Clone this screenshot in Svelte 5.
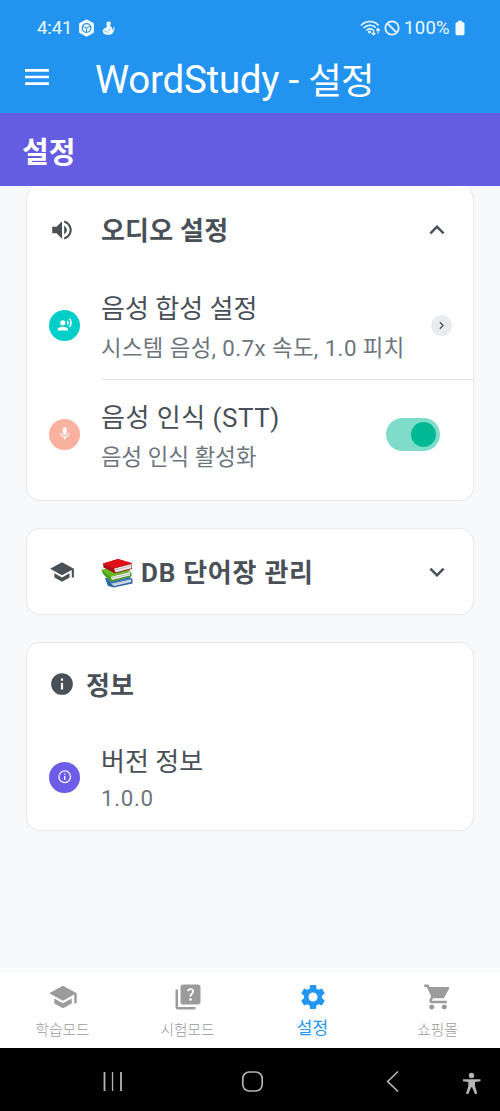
<script lang="ts">
  const icons = {
    volume:
      'M14,3.23V5.29C16.89,6.15 19,8.83 19,12C19,15.17 16.89,17.84 14,18.7V20.77C18,19.86 21,16.28 21,12C21,7.72 18,4.14 14,3.23M16.5,12C16.5,10.23 15.5,8.71 14,7.97V16C15.5,15.29 16.5,13.76 16.5,12M3,9V15H7L12,20V4L7,9H3Z',
    school:
      'M12,3L1,9L12,15L21,10.09V17H23V9M5,13.18V17.18L12,21L19,17.18V13.18L12,17L5,13.18Z',
    info: 'M13,9H11V7H13M13,17H11V11H13M12,2A10,10 0 0,0 2,12A10,10 0 0,0 12,22A10,10 0 0,0 22,12A10,10 0 0,0 12,2Z',
    infoOutline:
      'M11,9H13V7H11M12,20C7.59,20 4,16.41 4,12C4,7.59 7.59,4 12,4C16.41,4 20,7.59 20,12C20,16.41 16.41,20 12,20M12,2A10,10 0 0,0 2,12A10,10 0 0,0 12,22A10,10 0 0,0 22,12A10,10 0 0,0 12,2M11,17H13V11H11V17Z',
    mic: 'M12,2A3,3 0 0,1 15,5V11A3,3 0 0,1 12,14A3,3 0 0,1 9,11V5A3,3 0 0,1 12,2M19,11C19,14.53 16.39,17.44 13,17.93V21H11V17.93C7.61,17.44 5,14.53 5,11H7A5,5 0 0,0 12,16A5,5 0 0,0 17,11H19Z',
    voice:
      'M9,5A4,4 0 0,1 13,9A4,4 0 0,1 9,13A4,4 0 0,1 5,9A4,4 0 0,1 9,5M9,15C11.67,15 17,16.34 17,19V21H1V19C1,16.34 6.33,15 9,15M16.76,5.36C18.78,7.56 18.78,10.61 16.76,12.63L15.08,10.94C15.92,9.76 15.92,8.23 15.08,7.05L16.76,5.36M20.07,2C24,6.05 23.97,12.11 20.07,16L18.44,14.37C21.21,11.19 21.21,6.65 18.44,3.63L20.07,2Z',
    up: 'M7.41,15.41L12,10.83L16.59,15.41L18,14L12,8L6,14L7.41,15.41Z',
    down: 'M7.41,8.58L12,13.17L16.59,8.58L18,10L12,16L6,10L7.41,8.58Z',
    right: 'M8.59,16.58L13.17,12L8.59,7.41L10,6L16,12L10,18L8.59,16.58Z',
    menu: 'M3,6H21V8H3V6M3,11H21V13H3V11M3,16H21V18H3V16Z',
    quiz: 'M4 6H2v14c0 1.1.9 2 2 2h14v-2H4V6zM20 2H8c-1.1 0-2 .9-2 2v12c0 1.1.9 2 2 2h12c1.1 0 2-.9 2-2V4c0-1.1-.9-2-2-2zm-5.99 13c-.59 0-1.05-.47-1.05-1.05 0-.59.47-1.04 1.05-1.04.59 0 1.04.45 1.04 1.04-.01.58-.45 1.05-1.04 1.05zm2.5-6.17c-.63.93-1.23 1.21-1.56 1.81-.13.24-.18.4-.18 1.18h-1.52c0-.41-.06-1.08.26-1.65.41-.73 1.18-1.16 1.63-1.8.48-.68.21-1.94-1.14-1.94-.88 0-1.32.67-1.5 1.23l-1.37-.57C11.51 5.96 12.52 5 13.99 5c1.23 0 2.08.56 2.51 1.26.37.61.58 1.73.01 2.57z',
    cog: 'M19.14 12.94c.04-.3.06-.61.06-.94 0-.32-.02-.64-.07-.94l2.03-1.58c.18-.14.23-.41.12-.61l-1.92-3.32c-.12-.22-.37-.29-.59-.22l-2.39.96c-.5-.38-1.03-.7-1.62-.94l-.36-2.54c-.04-.24-.24-.41-.48-.41h-3.84c-.24 0-.43.17-.47.41l-.36 2.54c-.59.24-1.13.57-1.62.94l-2.39-.96c-.22-.08-.47 0-.59.22L2.74 8.87c-.12.21-.08.47.12.61l2.03 1.58c-.05.3-.09.63-.09.94s.02.64.07.94l-2.03 1.58c-.18.14-.23.41-.12.61l1.92 3.32c.12.22.37.29.59.22l2.39-.96c.5.38 1.03.7 1.62.94l.36 2.54c.05.24.24.41.48.41h3.84c.24 0 .44-.17.47-.41l.36-2.54c.59-.24 1.13-.56 1.62-.94l2.39.96c.22.08.47 0 .59-.22l1.92-3.32c.12-.22.07-.47-.12-.61l-2.01-1.58zM12 15.6c-1.98 0-3.6-1.62-3.6-3.6s1.62-3.6 3.6-3.6 3.6 1.62 3.6 3.6-1.62 3.6-3.6 3.6z',
    cart: 'M7 18c-1.1 0-1.99.9-1.99 2S5.9 22 7 22s2-.9 2-2-.9-2-2-2zM1 2v2h2l3.6 7.59-1.35 2.45c-.16.28-.25.61-.25.96 0 1.1.9 2 2 2h12v-2H7.42c-.14 0-.25-.11-.25-.25l.03-.12.9-1.63h7.45c.75 0 1.41-.41 1.75-1.03l3.58-6.49c.08-.14.12-.31.12-.48 0-.55-.45-1-1-1H5.21l-.94-2H1zm16 16c-1.1 0-1.99.9-1.99 2s.89 2 1.99 2 2-.9 2-2-.9-2-2-2z'
  };

  const tabs = [
    { id: 'study', label: '학습모드', icon: icons.school },
    { id: 'exam', label: '시험모드', icon: icons.quiz },
    { id: 'settings', label: '설정', icon: icons.cog },
    { id: 'shop', label: '쇼핑몰', icon: icons.cart }
  ];

  let active = $state('settings');
  let stt = $state(true);
  let audioOpen = $state(true);
</script>

{#snippet icon(d: string, size: number)}
  <svg class="icon" width={size} height={size} viewBox="0 0 24 24" aria-hidden="true"><path {d} /></svg>
{/snippet}

<div class="screen">
  <div class="status">
    <span class="clock">4:41</span>
    <svg class="hex" width="17" height="18" viewBox="0 0 17 18">
      <path d="M8.5 1.2 15 4.8v8.4L8.5 16.8 2 13.2V4.8z" fill="#effaff" stroke="#effaff" stroke-width="1.8" stroke-linejoin="round" />
      <circle cx="8.5" cy="9" r="4.3" fill="none" stroke="#2994e9" stroke-width="1.2" />
      <path d="M5 7.3 8.5 9 12 7.3M8.5 9v4" fill="none" stroke="#2994e9" stroke-width="1" />
    </svg>
    <svg class="pet" width="13" height="14" viewBox="0 0 13 14" fill="#effaff">
      <path d="M5.3.3 6.5 1l1.700-.7.6 2.500-.8 2.200c2 1 2.800 2.700 2.200 4.500l1.300-1.800-.5-1.200 1.200-.3.4 1.300-1.200 3.500c-.8 2-2.700 2.800-5.400 2.800C2.500 13.800.7 12.500.7 10.300.7 8.300 2.200 7 4.300 6.400L5 4.800l-.9-1.600z" />
      <path d="M2.500 9.800l3.500 1.700M6.500 8.500l1.800.8" stroke="#2994e9" stroke-width=".6" />
    </svg>
    <div class="system">
      <svg width="21" height="18" viewBox="0 0 21 18" fill="none" stroke="#effaff" stroke-width="1.5">
        <path d="M1 6.500c4.800-5.200 12.800-5.200 17.600 0M3.600 9c3.500-3.700 9-3.700 12.300-.5M6.300 11.500c1.900-2 4.500-2.200 6.500-.7" />
        <circle cx="9.500" cy="13" r=".7" fill="#effaff" />
        <path d="M13.500 10.500v5M11.600 13.800l1.900 2 1.900-2M18 14.500V9.800M16.200 11.500 18 9.700l1.800 1.800" stroke-width="1.2" />
      </svg>
      <svg class="mute" width="16" height="16" viewBox="0 0 16 16" fill="none" stroke="#effaff" stroke-width="1.7">
        <circle cx="8" cy="8" r="6.7" /><path d="M3.300 3.300l9.400 9.400" />
      </svg>
      <span class="percent">100%</span>
      <svg width="10" height="16" viewBox="0 0 10 16" fill="#effaff">
        <path d="M3 .7h4v1.600h1.200q1.300 0 1.300 1.300v10q0 1.600-1.600 1.600H2.100Q.5 15.200.5 13.600v-10q0-1.300 1.300-1.300H3z" />
      </svg>
    </div>
  </div>

  <header class="appbar">
    <button class="plain" aria-label="메뉴">{@render icon(icons.menu, 32)}</button>
    <h1>WordStudy - <span>설정</span></h1>
  </header>

  <div class="banner"><h2>설정</h2></div>

  <main>
    <section class="card audio">
      <button class="plain head" onclick={() => (audioOpen = !audioOpen)}>
        {@render icon(icons.volume, 26)}
        <span class="title">오디오 설정</span>
        {@render icon(audioOpen ? icons.up : icons.down, 30)}
      </button>
      {#if audioOpen}
        <div class="row synth">
          <span class="badge teal">{@render icon(icons.voice, 15.5)}</span>
          <div class="copy">
            <p>음성 합성 설정</p>
            <small>시스템 음성, 0.7x 속도, 1.0 피치</small>
          </div>
          <span class="more">{@render icon(icons.right, 15)}</span>
        </div>
        <div class="row stt">
          <span class="badge pink">{@render icon(icons.mic, 15.5)}</span>
          <div class="copy">
            <p>음성 인식 (STT)</p>
            <small>음성 인식 활성화</small>
          </div>
          <button class="plain switch" class:on={stt} aria-label="음성 인식" onclick={() => (stt = !stt)}>
            <i></i>
          </button>
        </div>
      {/if}
    </section>

    <section class="card words">
      <button class="plain head">
        {@render icon(icons.school, 26)}
        <span class="title books">
          <svg width="34" height="30" viewBox="0 0 34 30" aria-hidden="true">
            <path d="M5 20.500 24 15l8.500 6.500v4L14 29.500 8 28z" fill="#2f69ad" />
            <path d="M11 25.500 31 21v3L14 28z" fill="#dce5ec" />
            <path d="M5 20.500 24 15l8.500 6L12 25.500z" fill="#3b78bd" />
            <path d="M1.500 12 21 9l10.500 6v3.500L11 24 3 16z" fill="#4a9a20" />
            <path d="M10.500 18.500 30 14v3.500L12 22z" fill="#e5e5e3" />
            <path d="M1.500 12 20 7l11 6-20.500 6z" fill="#66bb20" />
            <path d="M3 5.500 18 1l14 4.500v5.500L15 15.500 3.500 9.500z" fill="#a7121a" />
            <path d="M14 10.500 31.500 6v4.300L15.500 14.500z" fill="#e8e5e5" />
            <path d="M3 5.500 18 1l14 4L14 10.500z" fill="#df1019" />
            <path d="M15 12 31 7.700M12 20l17-4M13 26.500 30 22.700" fill="none" stroke="#a9adb0" stroke-width=".6" />
          </svg>
          DB 단어장 관리
        </span>
        {@render icon(icons.down, 30)}
      </button>
    </section>

    <section class="card about">
      <div class="about-head">
        {@render icon(icons.info, 26)}
        <span class="title">정보</span>
      </div>
      <div class="row version">
        <span class="badge purple">{@render icon(icons.infoOutline, 15.5)}</span>
        <div class="copy">
          <p>버전 정보</p>
          <small>1.0.0</small>
        </div>
      </div>
    </section>
  </main>

  <nav class="tabs">
    {#each tabs as tab}
      <button class="plain" class:active={active === tab.id} onclick={() => (active = tab.id)}>
        {@render icon(tab.icon, 30)}
        <span>{tab.label}</span>
      </button>
    {/each}
  </nav>

  <div class="system-nav">
    <svg width="500" height="63" viewBox="0 0 500 63" fill="none" stroke="#b4b4b4">
      <path d="M104.500 24v19M121 24v19" stroke-width="1.8" />
      <path d="M112.500 24v19" stroke-width="1.3" />
      <rect x="242.800" y="24" width="19.4" height="19" rx="6.5" stroke-width="1.7" />
      <path d="M398 23.500 387.700 33.500 398 43.500" stroke-width="1.7" />
      <g fill="#b4b4b4" stroke="none">
        <circle cx="471.500" cy="27.5" r="2.7" />
        <path d="M463 31.200h17.500v2l-5.500.7v4l2.300 7.600-2.200.7-3-7h-.9l-3 7-2.200-.7 2.300-7.600v-4l-5.300-.7z" />
      </g>
    </svg>
  </div>
</div>

<style>
  :global(body) {
    background: #f8f9fb;
  }
  .screen {
    display: flex;
    flex-direction: column;
    width: 500px;
    height: 1111px;
    overflow: hidden;
    color: #495057;
    background: #f8f9fb;
    font-family: Roboto, 'Noto Sans CJK KR', sans-serif;
  }
  h1,
  h2,
  p {
    margin: 0;
    font-weight: 400;
  }
  .plain {
    padding: 0;
    border: 0;
    color: inherit;
    background: none;
    font: inherit;
    text-align: left;
  }
  .icon {
    display: block;
    flex: none;
    fill: currentColor;
  }
  .status {
    display: flex;
    flex: none;
    align-items: center;
    height: 56px;
    padding: 0 35px 0 37px;
    color: #effaff;
    background: #2294f0;
  }
  .status svg {
    display: block;
  }
  .clock,
  .percent {
    font-size: 18.5px;
    line-height: 56px;
  }
  .clock {
    width: 35px;
    letter-spacing: -0.1px;
  }
  .hex {
    margin-left: 6px;
  }
  .pet {
    margin-left: 7px;
  }
  .system {
    display: flex;
    align-items: center;
    margin-left: auto;
  }
  .mute {
    margin: 0 4px 0 3px;
  }
  .percent {
    width: 51px;
    letter-spacing: 0.3px;
  }
  .appbar {
    display: flex;
    flex: none;
    gap: 42px;
    height: 57px;
    padding-left: 21px;
    color: #fff;
    background: #2294f0;
  }
  .appbar button {
    height: 42px;
  }
  h1 {
    font-size: 38.5px;
    line-height: 48px;
    letter-spacing: -0.25px;
    white-space: nowrap;
  }
  h1 span {
    font-size: 36.5px;
    line-height: 1;
    letter-spacing: -0.8px;
    vertical-align: -1px;
  }
  .banner {
    flex: none;
    height: 73px;
    padding-left: 22px;
    color: #fff;
    background: #655de1;
  }
  h2 {
    font-size: 29px;
    font-weight: 700;
    line-height: 81px;
  }
  main {
    display: flex;
    flex: 1;
    flex-direction: column;
    gap: 27px;
    padding: 0 26px;
  }
  .card {
    box-sizing: border-box;
    border: 1px solid #e7e9ec;
    border-radius: 14px;
    background: #fff;
    box-shadow: 0 0 2px #00000008;
  }
  .audio {
    height: 315px;
    border-top-color: #fff;
  }
  .words {
    height: 87px;
  }
  .about {
    height: 189px;
  }
  .head {
    display: flex;
    align-items: center;
    width: 100%;
    height: 86px;
    padding: 0 21px 0 22px;
  }
  .audio .head {
    height: 85px;
  }
  .audio .title {
    padding-top: 3px;
  }
  .title {
    padding-top: 2px;
    font-size: 26px;
    font-weight: 700;
    line-height: 36px;
    letter-spacing: 0.2px;
  }
  .head .title {
    flex: 1;
    margin-left: 26px;
  }
  .books {
    display: flex;
    gap: 7px;
    align-items: center;
    letter-spacing: 0.75px;
  }
  .books svg {
    margin-left: -1px;
  }
  .row {
    display: flex;
    align-items: center;
    padding-left: 22px;
  }
  .badge {
    display: flex;
    flex: none;
    align-items: center;
    justify-content: center;
    width: 31px;
    height: 31px;
    border-radius: 50%;
    color: #fff;
  }
  .teal {
    background: #00cec9;
  }
  .pink {
    background: #fab1a0;
  }
  .purple {
    background: #6c5ce7;
  }
  .copy {
    flex: 1;
    margin-left: 21px;
    padding-top: 4px;
  }
  .copy p {
    font-size: 26px;
    line-height: 40px;
    white-space: nowrap;
  }
  .copy small {
    display: block;
    color: #6c757d;
    font-size: 22.3px;
    line-height: 38px;
    letter-spacing: 0.42px;
    white-space: nowrap;
  }
  .stt p {
    letter-spacing: 0.5px;
  }
  .stt small {
    letter-spacing: 0.1px;
  }
  .synth {
    height: 108px;
    background: linear-gradient(#e4e5e8, #e4e5e8) 74px 100% / 100% 1px no-repeat;
  }
  .stt {
    height: 108px;
  }
  .stt .copy {
    padding-top: 6px;
  }
  .more {
    display: flex;
    align-items: center;
    justify-content: center;
    width: 21px;
    height: 21px;
    margin-right: 21px;
    border-radius: 50%;
    background: #e9ecef;
  }
  .synth .badge,
  .synth .more {
    margin-bottom: 2px;
  }
  .switch {
    display: flex;
    width: 54px;
    height: 33px;
    margin-right: 33px;
    padding: 4px;
    border-radius: 17px;
    background: #ced4da;
  }
  .switch i {
    width: 25px;
    height: 25px;
    border-radius: 50%;
    background: #fff;
  }
  .switch.on {
    justify-content: flex-end;
    background: #7fdcca;
  }
  .switch.on i {
    background: #00b894;
  }
  .about-head {
    display: flex;
    gap: 11px;
    align-items: center;
    height: 81px;
    padding-left: 22px;
  }
  .about-head .title {
    padding-top: 4px;
  }
  .version {
    height: 106px;
  }
  .version .copy {
    padding-top: 5px;
  }
  .version p,
  .version small {
    line-height: 36px;
  }
  .version small {
    letter-spacing: 0.7px;
  }
  .tabs {
    display: grid;
    flex: none;
    grid-template-columns: repeat(4, 1fr);
    height: 75px;
    color: #9b9b9b;
    background: #fff;
    border-top: 1px solid #fafbfc;
  }
  .tabs button {
    display: flex;
    flex-direction: column;
    align-items: center;
    padding-top: 9px;
  }
  .tabs span {
    font-size: 14.7px;
    font-weight: 300;
    line-height: 36px;
    white-space: nowrap;
  }
  .tabs .active {
    color: #2196f3;
  }
  .tabs .active span {
    font-size: 17px;
    font-weight: 400;
    line-height: 32px;
  }
  .system-nav {
    flex: none;
    height: 63px;
    background: #000;
  }
  .system-nav svg {
    display: block;
  }
</style>
